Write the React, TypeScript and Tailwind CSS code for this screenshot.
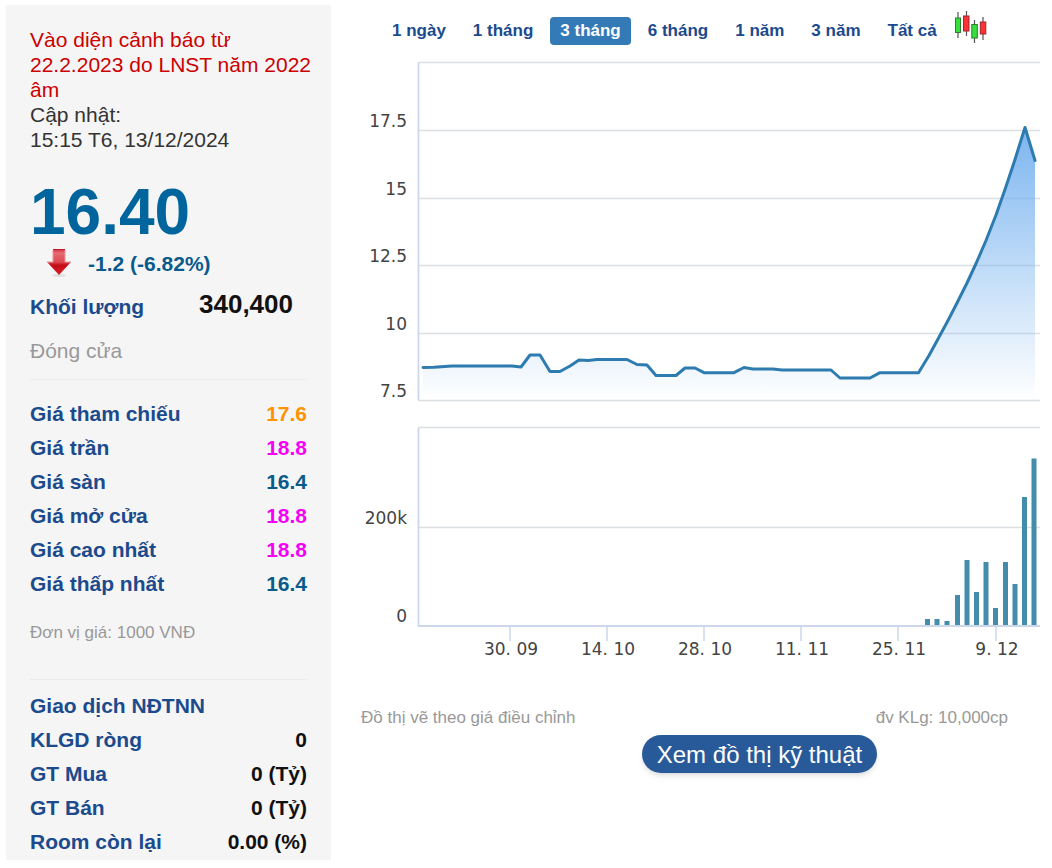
import { useState } from "react";
import clsx from "clsx";

type Row = {
  label: string;
  value: string;
  color: string;
};

const ranges = ["1 ngày", "1 tháng", "3 tháng", "6 tháng", "1 năm", "3 năm", "Tất cả"];

const priceRows: Row[] = [
  { label: "Giá tham chiếu", value: "17.6", color: "text-[#ff9200]" },
  { label: "Giá trần", value: "18.8", color: "text-[#f500f5]" },
  { label: "Giá sàn", value: "16.4", color: "text-[#0a5a8c]" },
  { label: "Giá mở cửa", value: "18.8", color: "text-[#f500f5]" },
  { label: "Giá cao nhất", value: "18.8", color: "text-[#f500f5]" },
  { label: "Giá thấp nhất", value: "16.4", color: "text-[#0a5a8c]" },
];

const foreignRows: Row[] = [
  { label: "KLGD ròng", value: "0", color: "text-[#111111]" },
  { label: "GT Mua", value: "0 (Tỷ)", color: "text-[#111111]" },
  { label: "GT Bán", value: "0 (Tỷ)", color: "text-[#111111]" },
  { label: "Room còn lại", value: "0.00 (%)", color: "text-[#111111]" },
];

const priceLine =
  "423,367.5 434,367.3 452,366 475,366 512,366 521,367 530,355 540,355 550,371.5 560,371.5 570,366 579,360 588,360.5 597,359.5 627,359.5 637,364.5 647,365 656,375.5 676,375.5 685,368 695,368 704,372.7 734,372.7 744,367.5 753,369 773,369 782,370 831,370 840,378 870,378 880,372.7 918.5,372.7 929,355.5 938,339 948,320.5 957.5,302 967,283 976.5,262.5 986,240.5 996,215 1005.5,188 1015,159.5 1025,127.5 1035,160.5";

const priceTicks = [
  { label: "", y: 62.5 },
  { label: "17.5", y: 130.5 },
  { label: "15", y: 198.5 },
  { label: "12.5", y: 265.5 },
  { label: "10", y: 333.5 },
  { label: "7.5", y: 400.5 },
];

const volumeTicks = [
  { label: "", y: 427.5 },
  { label: "200k", y: 527.5 },
  { label: "0", y: 626 },
];

const dateTicks = [
  { label: "30. 09", x: 510 },
  { label: "14. 10", x: 607 },
  { label: "28. 10", x: 704 },
  { label: "11. 11", x: 801 },
  { label: "25. 11", x: 898 },
  { label: "9. 12", x: 996 },
];

// [center x, top y]
const bars = [
  [927.5, 619], [937, 619], [947, 621], [957.5, 595], [967, 560], [976.5, 592],
  [986, 562], [995.5, 608], [1005.5, 562], [1015, 584], [1024.5, 497], [1034, 458.5],
];

function DataTable({ rows, title, caption }: { rows: Row[]; title?: string; caption: string }) {
  return (
    <table className="w-full font-bold" aria-label={caption}>
      {title && (
        <thead>
          <tr className="h-[34px]">
            <th colSpan={2} className="p-0 text-left text-[#1b4a8d]">{title}</th>
          </tr>
        </thead>
      )}
      <tbody>
        {rows.map((row) => (
          <tr key={row.label} className="h-[34px]">
            <th scope="row" className="p-0 text-left text-[#1b4a8d]">{row.label}</th>
            <td className={clsx("p-0 text-right", row.color)}>{row.value}</td>
          </tr>
        ))}
      </tbody>
    </table>
  );
}

function DownArrow() {
  return (
    <svg width="26" height="30" viewBox="0 0 26 30" aria-hidden="true">
      <defs>
        <linearGradient id="arrowShaft" x1="0" y1="0" x2="0" y2="1">
          <stop offset="0" stopColor="#d4283a" />
          <stop offset="0.15" stopColor="#e56b73" />
          <stop offset="0.5" stopColor="#dc4a52" />
          <stop offset="0.62" stopColor="#c40d16" />
          <stop offset="1" stopColor="#d8202a" />
        </linearGradient>
      </defs>
      <ellipse cx="13" cy="27.5" rx="7" ry="1.5" fill="#dedede" />
      <path d="M7 1H19V14H25L13 27L1 14H7Z" fill="url(#arrowShaft)" />
      <path d="M7 1.5H19" stroke="#c31c2c" />
      <path d="M1 14H7V2M19 2V14H25" fill="none" stroke="#e8989c" />
    </svg>
  );
}

function Candles() {
  return (
    <svg width="34" height="34" viewBox="954 10 34 34" aria-hidden="true">
      <path d="M958 12V38M966.5 11V36M974.5 20V43M983 17V40" stroke="#555" strokeWidth="1.2" />
      <g strokeWidth="1">
        <rect x="955.5" y="18" width="5" height="14.5" fill="#35e03c" stroke="#2c7d2f" />
        <rect x="963.5" y="16" width="5.5" height="15" fill="#fb3338" stroke="#98282b" />
        <rect x="971.8" y="24.5" width="5.5" height="13.5" fill="#35e03c" stroke="#2c7d2f" />
        <rect x="980.3" y="22" width="5.5" height="12" fill="#fb3338" stroke="#98282b" />
      </g>
    </svg>
  );
}

function StockChart() {
  return (
    <svg
      viewBox="331 52 721 618"
      className="block w-full"
      role="img"
      aria-label="Biểu đồ giá và khối lượng"
      fontFamily="'DejaVu Sans', sans-serif"
      fontSize="17"
      fill="#444444"
    >
      <defs>
        <linearGradient id="priceArea" x1="0" y1="0" x2="0" y2="1">
          <stop offset="0" stopColor="#7cb5f0" />
          <stop offset="1" stopColor="#7cb5f0" stopOpacity="0" />
        </linearGradient>
      </defs>
      {[...priceTicks, ...volumeTicks].map((tick) => (
        <g key={tick.y}>
          {tick.y !== 626 && (
            <line x1="418" x2="1040" y1={tick.y} y2={tick.y} stroke="#dcdfe2" strokeWidth="1.3" />
          )}
          <text x="407" y={tick.y - 4} textAnchor="end">{tick.label}</text>
        </g>
      ))}
      <polygon points={`423,400 ${priceLine} 1035,400`} fill="url(#priceArea)" />
      <polyline
        points={priceLine}
        fill="none"
        stroke="#2e7caf"
        strokeWidth="3"
        strokeLinejoin="round"
        strokeLinecap="round"
      />
      {bars.map(([x, y]) => (
        <rect key={x} x={x - 2.5} y={y} width="5" height={625.5 - y} fill="#448cab" />
      ))}
      <path d="M418.5 63V400M418.5 428V626M418 626H1040" fill="none" stroke="#cdd7ec" strokeWidth="1.8" />
      {dateTicks.map((tick) => (
        <g key={tick.label}>
          <line x1={tick.x} x2={tick.x} y1="626" y2="641" stroke="#cdd7ec" strokeWidth="1.5" />
          <text x={tick.x + 1} y="655" textAnchor="middle">{tick.label}</text>
        </g>
      ))}
    </svg>
  );
}

export default function App() {
  const [range, setRange] = useState("3 tháng");

  return (
    <div className="flex items-start bg-white pt-[5px] pl-1.5 font-['Liberation_Sans',Arial,sans-serif] text-[21px] leading-[25px]">
      {/* Quote panel */}
      <aside className="w-[325px] shrink-0 bg-[#f5f5f5] pt-[22px] pb-0.5 pl-6">
        <div className="pr-5">
          <p className="text-[#cc0000]">Vào diện cảnh báo từ 22.2.2023 do LNST năm 2022 âm</p>
          <p className="text-[#333333]">
            Cập nhật:
            <br />
            15:15 T6, 13/12/2024
          </p>
        </div>

        <div className="pr-6">
          <div className="mt-6 text-[64px] leading-[72px] font-bold text-[#00659c]">16.40</div>
          <div className="flex h-[30px] items-center pl-4 font-bold text-[#0a5a8c]">
            <DownArrow />
            <span className="pl-4">-1.2 (-6.82%)</span>
          </div>
          <div className="mt-1.5 flex h-10 items-center justify-between pr-3.5 font-bold">
            <span className="pt-1 text-[#1b4a8d]">Khối lượng</span>
            <span className="text-[26px] text-[#111111]">340,400</span>
          </div>
          <p className="mt-3.5 text-[#999999]">Đóng cửa</p>
          <hr className="mt-4 mb-4 border-[#ebebeb]" />
          <DataTable rows={priceRows} caption="Giá" />
          <p className="mt-5 text-[17px] text-[#999999]">Đơn vị giá: 1000 VNĐ</p>
          <hr className="mt-[34px] mb-2 border-[#ebebeb]" />
          <DataTable rows={foreignRows} title="Giao dịch NĐTNN" caption="Giao dịch NĐTNN" />
        </div>
      </aside>

      {/* Chart */}
      <main className="min-w-0 flex-1">
        <nav className="flex h-[47px] items-center pt-1 pl-[51px] text-[17px] font-bold text-[#1b4a8d]">
          {ranges.map((item) => (
            <button
              key={item}
              onClick={() => setRange(item)}
              className={clsx(
                "mr-[7px] h-7 rounded px-2.5 whitespace-nowrap",
                item === range && "bg-[#337ab7] text-white"
              )}
            >
              {item}
            </button>
          ))}
          <a href="#candles" aria-label="Biểu đồ nến" className="pb-2">
            <Candles />
          </a>
        </nav>
        <StockChart />
        <div className="mt-[35px] flex justify-between pr-11 pl-[30px] text-[17px] text-[#999999]">
          <span>Đồ thị vẽ theo giá điều chỉnh</span>
          <span>đv KLg: 10,000cp</span>
        </div>
        <div className="mt-[5px] flex justify-center pl-[136px]">
          <button className="h-[38px] rounded-full bg-[#285a9a] px-[15px] text-[24px] text-white shadow-md">
            Xem đồ thị kỹ thuật
          </button>
        </div>
      </main>
    </div>
  );
}
